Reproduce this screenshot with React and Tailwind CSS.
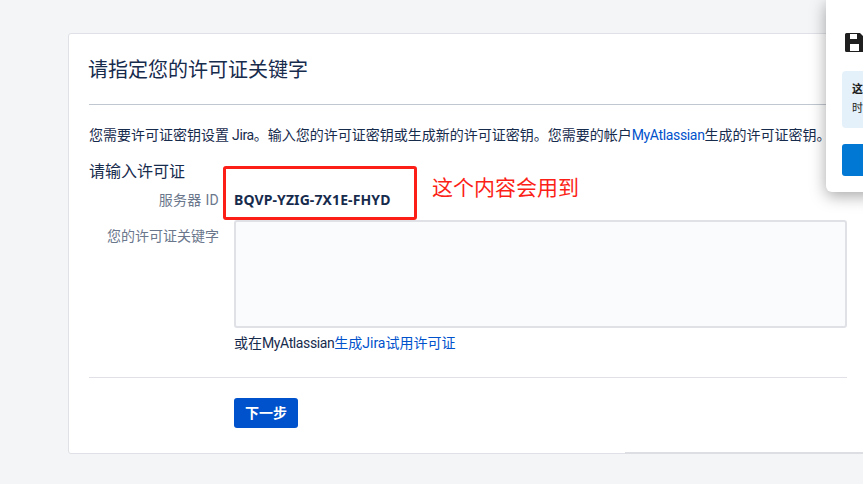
export default function App() {
  return (
    <div
      className="relative h-[484px] w-[863px] overflow-hidden bg-[#f4f5f7] pl-[68px] pt-[33px] text-[#172b4d]"
      style={{ fontFamily: 'Roboto, "Noto Sans CJK SC", sans-serif' }}
    >
      {/* Setup card */}
      <div className="h-[421px] w-[820px] rounded-[3px] border border-[#dfe1e6] bg-white pl-5 pr-[40px]">
        <h1 className="flex h-[71px] items-center border-b border-[#c1c7d0] pt-[2px] text-[20px] font-normal">
          <span className="-ml-[1px]">请指定您的许可证关键字</span>
        </h1>
        <p className="mt-[20px] whitespace-nowrap text-[14px] leading-5">
          您需要许可证密钥设置<span className="tracking-[-0.4px]"> Jira</span>。输入您的许可证密钥或生成新的许可证密钥。您需要的帐户
          <a className="tracking-[-0.35px] text-[#0052cc]">MyAtlassian</a>生成的许可证密钥。
        </p>
        <h2 className="mt-[17px] text-[16px] font-normal leading-5">请输入许可证</h2>

        <div className="mt-[7px] flex h-[20px] items-center">
          <span className="w-[130px] pt-[2px] text-right text-[14px] tracking-[0.3px] text-[#6b778c]">服务器 ID</span>
          <strong
            className="ml-[15px] text-[14px] font-bold tracking-[0.1px]"
            style={{ fontFamily: '"Noto Sans", sans-serif' }}
          >
            BQVP-YZIG-7X1E-FHYD
          </strong>
        </div>

        <div className="mt-[11px] flex">
          <label className="w-[130px] pt-[6px] text-right text-[14px] leading-5 text-[#6b778c]">
            您的许可证关键字
          </label>
          <div className="ml-[15px] flex-1">
            <div className="h-[108px] rounded-[3px] border-2 border-[#dfe1e6] bg-[#fafbfc]" />
            <p className="mt-[5px] text-[14px] leading-5">
              或在<span className="tracking-[-0.4px]">MyAtlassian</span>
              <a className="text-[#0052cc]">生成Jira试用许可证</a>
            </p>
          </div>
        </div>

        <div className="mt-[24px] border-t border-[#dfe1e6] pl-[145px] pt-[20px]">
          <button
            type="button"
            className="h-[30px] w-[64px] rounded-[3px] bg-[#0052cc] text-[14px] font-bold text-white"
          >
            下一步
          </button>
        </div>
      </div>

      {/* Red annotation */}
      <div className="absolute left-[223px] top-[166px] h-[54px] w-[194px] rounded-[3px] border-[3px] border-[#fb1f17]" />
      <span className="absolute left-[432px] top-[174px] text-[21px] leading-7 text-[#fb1f17]">这个内容会用到</span>

      {/* Smear left on the card's bottom edge in the screenshot */}
      <div className="absolute left-[625px] top-[452px] h-[2px] w-[238px] bg-[#dcdee3]" />

      {/* Popup clipped by the window */}
      <div className="absolute left-[826px] top-0 h-[192px] w-[200px] rounded-bl-[6px] bg-white pl-4 shadow-[0_4px_16px_rgba(0,0,0,0.35)]">
        <svg viewBox="0 0 20 19" className="ml-[3px] mt-[33px] block h-[19px] w-[20px]">
          <path
            fillRule="evenodd"
            fill="#1f1f1f"
            d="M1.5 0H15l5 5v12.5a1.5 1.5 0 0 1-1.5 1.5h-17A1.5 1.5 0 0 1 0 17.5v-16A1.5 1.5 0 0 1 1.5 0ZM5 1v5h7V1ZM5 11v7h9v-7Z"
          />
        </svg>
        <div className="mt-[19px] h-[57px] rounded-[4px] bg-[#e5f1fa] pl-[10px] pt-[9px] text-[11px] leading-[19px] text-[#1b1b1b]">
          <div className="font-bold">这</div>
          <div>时</div>
        </div>
        <div className="mt-[16px] h-[32px] rounded-[3px] bg-[#0078d4]" />
      </div>
    </div>
  );
}
